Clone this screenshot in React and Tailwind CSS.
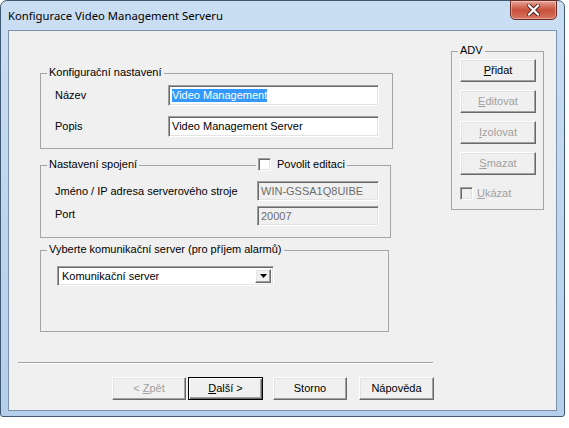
import React from 'react';

const sunken =
  'border border-t-[#a0a0a0] border-l-[#a0a0a0] border-r-white border-b-white shadow-[inset_1px_1px_0_#696969,inset_-1px_-1px_0_#e3e3e3]';
const raised =
  'border border-t-white border-l-white border-r-[#696969] border-b-[#696969] shadow-[inset_-1px_-1px_0_#a0a0a0,inset_1px_1px_0_#e3e3e3]';

const GroupBox = ({ title, className, children, extra }) => (
  <div className={`relative border border-[#a5a5a5] ${className}`}>
    <span className="absolute -top-[8px] left-[6px] px-[2px] leading-[13px] bg-[#f0f0f0] whitespace-nowrap">{title}</span>
    {extra}
    {children}
  </div>
);

const Button = ({ children, disabled, isDefault, className = '' }) => (
  <button
    className={`h-[23px] flex items-center justify-center bg-[#f0f0f0] leading-none ${
      isDefault
        ? 'border border-black shadow-[inset_1px_1px_0_white,inset_-1px_-1px_0_#696969,inset_-2px_-2px_0_#a0a0a0]'
        : raised
    } ${disabled ? 'text-[#a0a0a0]' : 'text-black'} ${className}`}
  >
    {children}
  </button>
);

const CheckBox = ({ disabled }) => (
  <span className={`block w-[13px] h-[13px] ${sunken} ${disabled ? 'bg-[#f0f0f0]' : 'bg-white'}`} />
);

export default function App() {
  return (
    <div className="w-[569px] h-[428px] bg-white font-['Liberation_Sans',Arial,sans-serif] text-[11px] text-black">
      <div className="w-[565px] h-[417px] rounded-t-[7px] rounded-b-[3px] border border-[#3f5874] bg-gradient-to-b from-[#cadef3] to-[#b5cee9] flex flex-col px-[7px] pb-[5px]">
        {/* title bar */}
        <div className="h-[29px] flex items-start shrink-0">
          <span className="mt-[7px] font-['Noto_Sans',sans-serif] text-[11.3px] leading-[15px] text-black">
            Konfigurace Video Management Serveru
          </span>
          <div className="ml-auto -mt-px w-[47px] h-[20px] rounded-b-[5px] border border-[#6a2e26] bg-gradient-to-b from-[#e8a497] via-[#c8503c] to-[#d8745f] flex items-center justify-center shadow-[inset_0_0_0_1px_rgba(255,255,255,0.35)]">
            <svg width="13" height="12" viewBox="0 0 13 12">
              <path d="M2 1.5 L11 10.5 M11 1.5 L2 10.5" stroke="#4a1a14" strokeWidth="4" strokeLinecap="square" />
              <path d="M2 1.5 L11 10.5 M11 1.5 L2 10.5" stroke="#ffffff" strokeWidth="2.2" strokeLinecap="square" />
            </svg>
          </div>
        </div>

        {/* client area */}
        <div className="flex-1 border border-[#7b92ae] bg-[#f0f0f0] flex flex-col">
          <div className="flex items-start">
            <div className="ml-[31px] mt-[42px] flex flex-col">
              <GroupBox title="Konfigurační nastavení" className="w-[353px] h-[76px] pt-[11px]">
                <div className="flex items-center h-[21px]">
                  <span className="w-[127px] pl-[14px]">Název</span>
                  <div className={`w-[211px] h-[21px] bg-white flex items-center pl-[3px] ${sunken}`}>
                    <span className="bg-[#3399ff] text-white leading-[13px]">Video Management</span>
                  </div>
                </div>
                <div className="flex items-center h-[21px] mt-[10px]">
                  <span className="w-[127px] pl-[14px]">Popis</span>
                  <div className={`w-[211px] h-[21px] bg-white flex items-center pl-[3px] ${sunken}`}>
                    Video Management Server
                  </div>
                </div>
              </GroupBox>

              <GroupBox
                title="Nastavení spojení"
                className="mt-[16px] w-[351px] h-[73px] pt-[15px]"
                extra={
                  <span className="absolute -top-[8px] left-[215px] px-[2px] h-[13px] bg-[#f0f0f0] flex items-center gap-[6px] whitespace-nowrap">
                    <CheckBox />
                    <span>Povolit editaci</span>
                  </span>
                }
              >
                <div className="flex items-center h-[20px]">
                  <span className="w-[216px] pl-[14px]">Jméno / IP adresa serverového stroje</span>
                  <div className={`w-[122px] h-[20px] bg-[#f0f0f0] text-[#6d6d6d] flex items-center pl-[3px] ${sunken}`}>
                    WIN-GSSA1Q8UIBE
                  </div>
                </div>
                <div className="flex items-center h-[20px] mt-[5px]">
                  <span className="w-[216px] pl-[14px] -mt-[3px]">Port</span>
                  <div className={`w-[122px] h-[20px] bg-[#f0f0f0] text-[#6d6d6d] flex items-center pl-[3px] ${sunken}`}>
                    20007
                  </div>
                </div>
              </GroupBox>

              <GroupBox
                title="Vyberte komunikační server (pro příjem alarmů)"
                className="mt-[12px] w-[349px] h-[82px] pt-[15px] pl-[16px]"
              >
                <div className={`w-[217px] h-[20px] bg-white flex items-stretch p-[2px] ${sunken}`}>
                  <span className="flex-1 flex items-center pl-[2px]">Komunikační server</span>
                  <span className={`w-[16px] bg-[#f0f0f0] flex items-center justify-center ${raised}`}>
                    <svg width="7" height="4" viewBox="0 0 7 4">
                      <path d="M0 0 H7 L3.5 4 Z" fill="#000" />
                    </svg>
                  </span>
                </div>
              </GroupBox>
            </div>

            <GroupBox title="ADV" className="ml-[58px] mt-[20px] w-[93px] h-[159px] pt-[7px] pl-[8px]">
              <div className="flex flex-col gap-[8px]">
                <Button className="w-[76px]">
                  <span><u>P</u>řidat</span>
                </Button>
                <Button className="w-[76px]" disabled>
                  <span><u>E</u>ditovat</span>
                </Button>
                <Button className="w-[76px]" disabled>
                  <span><u>I</u>zolovat</span>
                </Button>
                <Button className="w-[76px]" disabled>
                  <span><u>S</u>mazat</span>
                </Button>
              </div>
              <div className="mt-[12px] h-[13px] flex items-center gap-[4px] text-[#a0a0a0]">
                <CheckBox disabled />
                <span><u>U</u>kázat</span>
              </div>
            </GroupBox>
          </div>

          <div className="mt-[30px] ml-[9px] w-[415px] h-[2px] border-t border-t-[#a0a0a0] border-b border-b-white" />

          <div className="mt-[13px] flex">
            <Button className="ml-[103px] w-[74px]" disabled>
              <span>&lt; <u>Z</u>pět</span>
            </Button>
            <Button className="ml-[2px] w-[75px]" isDefault>
              <span><u>D</u>alší &gt;</span>
            </Button>
            <Button className="ml-[10px] w-[74px]">
              <span>Storno</span>
            </Button>
            <Button className="ml-[12px] w-[75px]">
              <span>Nápověda</span>
            </Button>
          </div>
        </div>
      </div>
    </div>
  );
}
